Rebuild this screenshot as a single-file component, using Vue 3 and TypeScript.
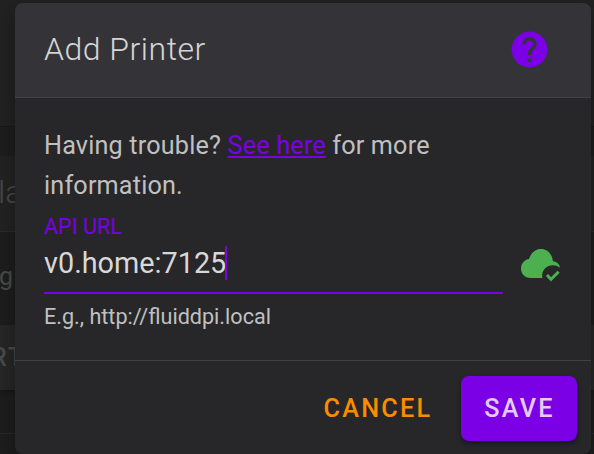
<script setup lang="ts">
import { ref } from 'vue'

const apiUrl = ref<string>('v0.home:7125')
</script>

<template>
  <div class="page">
    <div class="backdrop" aria-hidden="true">
      <div class="strip first"></div>
      <div class="strip heading"><span>la</span></div>
      <div class="strip label"><span>g</span></div>
      <div class="strip button"><span>RT</span></div>
      <div class="strip last"></div>
    </div>
    <section class="dialog" role="dialog">
      <header class="header">
        <h1 class="title">Add Printer</h1>
        <svg class="help" viewBox="0 0 24 24">
          <path d="M15.07,11.25L14.17,12.17C13.45,12.89 13,13.5 13,15H11V14.5C11,13.39 11.45,12.39 12.17,11.67L13.41,10.41C13.78,10.05 14,9.55 14,9C14,7.89 13.1,7 12,7A2,2 0 0,0 10,9H8A4,4 0 0,1 12,5A4,4 0 0,1 16,9C16,9.88 15.64,10.67 15.07,11.25M13,19H11V17H13M12,2A10,10 0 0,0 2,12A10,10 0 0,0 12,22A10,10 0 0,0 22,12C22,6.47 17.5,2 12,2Z" />
        </svg>
      </header>
      <div class="body">
        <p class="intro">Having trouble? <a class="link">See here</a> for more information.</p>
        <div class="row">
          <div class="field">
            <div class="field-label">API URL</div>
            <div class="input"><span class="value">{{ apiUrl }}</span><span class="caret"></span></div>
            <div class="hint">E.g., http://fluiddpi.local</div>
          </div>
          <svg class="cloud" viewBox="0 0 42 36">
            <path class="fill" d="M10.5 30C5 30 1 26 1 20.5C1 15.7 4.5 11.5 9 11C11 5 15.2 1 20.8 1C27.3 1 32 5.8 33 13.2C36.8 13.6 39.5 16 40 19.7C37.8 18 35.3 17.2 32.8 17.2C26.8 17.2 22.2 21.8 22.2 27.3C22.2 28.3 22.2 29.2 22.5 30Z" />
            <path class="tick" d="M27 27L31 31.3L38.6 23.7" />
          </svg>
        </div>
      </div>
      <footer class="actions">
        <button class="btn cancel">CANCEL</button>
        <button class="btn save">SAVE</button>
      </footer>
    </section>
  </div>
</template>

<style>
body {
  background: #1e1e1e;
  overflow: hidden;
}
</style>

<style scoped>
.page {
  position: relative;
  box-sizing: border-box;
  width: 594px;
  height: 454px;
  padding: 3px 3px 0 15px;
  overflow: hidden;
  background: #1e1e1e;
  font-family: Roboto, "Liberation Sans", sans-serif;
  color: #c0c0c1;
}
.backdrop {
  position: absolute;
  inset: 0;
  display: flex;
  flex-direction: column;
  color: #4b4b4b;
}
.strip {
  box-sizing: border-box;
  overflow: hidden;
  white-space: nowrap;
}
.first {
  height: 127px;
  background: #222;
  border-bottom: 1px solid #181818;
}
.heading {
  height: 76px;
  margin-top: 29px;
  background: #232324;
  border-bottom: 1px solid #2b2b2b;
  font-size: 32px;
  font-weight: 300;
  line-height: 73px;
}
.heading span {
  margin-left: -2px;
}
.label {
  height: 93px;
  font-size: 25px;
  line-height: 89px;
}
.label span {
  margin-left: -1px;
}
.button {
  height: 65px;
  background: #272728;
  font-size: 25px;
  font-weight: 500;
  line-height: 65px;
  box-shadow: 0 2px 4px #171717;
}
.button span {
  margin-left: -9px;
  letter-spacing: 2px;
}
.last {
  height: 44px;
  border-bottom: 1px solid #292929;
}
.dialog {
  position: relative;
  width: 576px;
  height: 451px;
  border-radius: 8px;
  overflow: hidden;
  background: #272729;
  box-shadow: 0 8px 24px rgba(0, 0, 0, 0.35);
}
.header {
  box-sizing: border-box;
  height: 95px;
  display: flex;
  align-items: center;
  justify-content: space-between;
  padding: 0 40px 2px 29px;
  background: #343438;
  border-bottom: 1px solid #414143;
}
.title {
  margin: 0;
  color: #d5d5d6;
  font-size: 32px;
  font-weight: 300;
  letter-spacing: 0.5px;
}
.help {
  width: 43px;
  height: 43px;
  fill: #7b00e5;
}
.body {
  box-sizing: border-box;
  height: 262px;
  padding: 28px 29px 0 29px;
}
.intro {
  margin: 0;
  width: 450px;
  font-size: 25.2px;
  line-height: 40px;
  letter-spacing: 0.18px;
}
.link {
  color: #7b00e5;
  text-decoration: underline;
  text-decoration-thickness: 2px;
  text-underline-offset: 2px;
}
.row {
  display: flex;
  justify-content: space-between;
}
.field {
  width: 459px;
}
.field-label {
  margin-top: 8px;
  height: 26px;
  color: #7b00e5;
  font-size: 21.6px;
  line-height: 26px;
}
.input {
  box-sizing: border-box;
  height: 54px;
  display: flex;
  align-items: flex-start;
  padding-top: 6px;
  border-bottom: 2px solid #7b00e5;
}
.value {
  color: #d8d8d9;
  font-size: 28.8px;
  line-height: 34px;
}
.caret {
  width: 2px;
  height: 34px;
  margin-left: -1px;
  background: #7b00e5;
}
.hint {
  margin-top: 9px;
  font-size: 21.6px;
  line-height: 28px;
}
.cloud {
  width: 42px;
  height: 36px;
  margin-top: 42px;
}
.fill {
  fill: #4caf50;
}
.tick {
  fill: none;
  stroke: #4caf50;
  stroke-width: 3;
}
.actions {
  box-sizing: border-box;
  height: 94px;
  display: flex;
  justify-content: flex-end;
  padding: 15px 14px 13px;
  border-top: 1px solid #414143;
}
.btn {
  height: 65px;
  padding: 0;
  border: 0;
  border-radius: 8px;
  background: none;
  font: 500 25.2px/65px Roboto, "Liberation Sans", sans-serif;
  letter-spacing: 2.25px;
}
.cancel {
  width: 138px;
  margin-right: 14px;
  color: #fb8c00;
}
.save {
  width: 116px;
  padding-left: 1px;
  background: #7b00e5;
  color: #e4ccfa;
  box-shadow: 0 3px 5px rgba(0, 0, 0, 0.4);
}
</style>
